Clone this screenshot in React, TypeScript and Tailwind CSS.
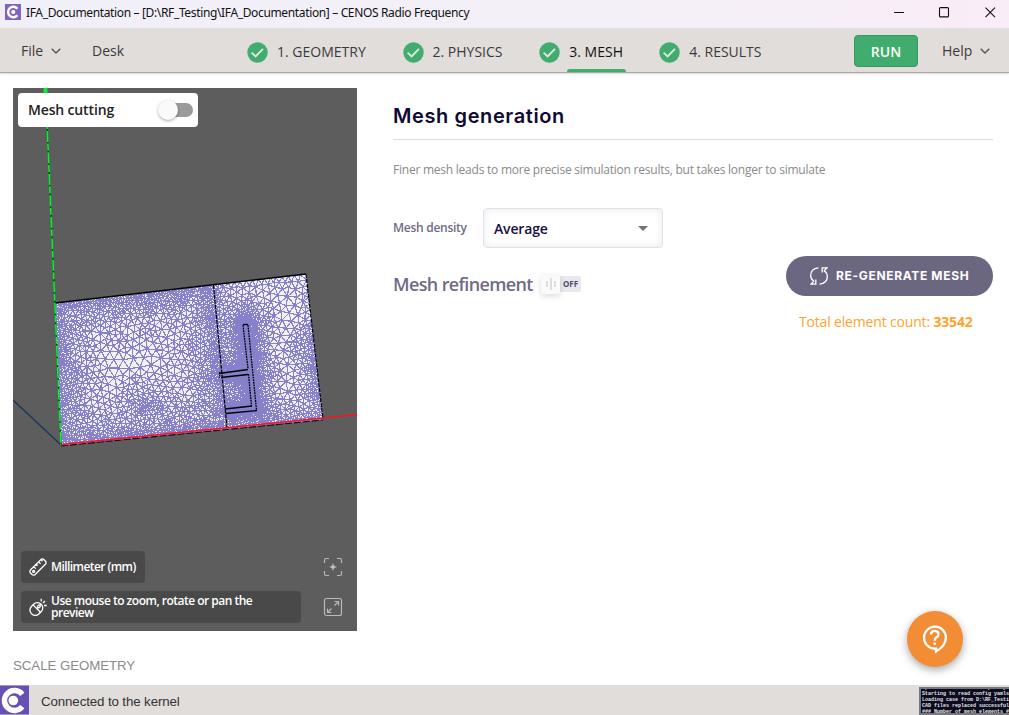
import React from "react";

type Pt = [number, number];

function createRandom(seed: number) {
  let s = seed;
  return () => {
    s = (s * 1664525 + 1013904223) % 4294967296;
    return s / 4294967296;
  };
}

const PLATE: Pt[] = [[55, 303], [306, 274], [323, 419], [61, 445]];

function segDist(x: number, y: number, a: Pt, b: Pt) {
  const dx = b[0] - a[0];
  const dy = b[1] - a[1];
  const t = Math.max(0, Math.min(1, ((x - a[0]) * dx + (y - a[1]) * dy) / (dx * dx + dy * dy)));
  return Math.hypot(x - a[0] - t * dx, y - a[1] - t * dy);
}

function inside(x: number, y: number) {
  return PLATE.every((a, i) => {
    const b = PLATE[(i + 1) % 4];
    return (b[0] - a[0]) * (y - a[1]) - (b[1] - a[1]) * (x - a[0]) > 0;
  });
}

const DIVIDER: [Pt, Pt] = [[213, 285], [227, 428]];
const ANTENNA: [Pt, Pt][] = [
  [[245, 324], [254, 410]],
  [[219, 375], [250, 371]],
  [[226, 411], [255, 408]],
];

// Target edge length of the mesh at a point of the plate.
function spacing(x: number, y: number) {
  let edge = 1e9;
  PLATE.forEach((a, i) => {
    edge = Math.min(edge, segDist(x, y, a, PLATE[(i + 1) % 4]));
  });
  const div = segDist(x, y, DIVIDER[0], DIVIDER[1]);
  let ant = 1e9;
  ANTENNA.forEach(([a, b]) => {
    ant = Math.min(ant, segDist(x, y, a, b));
  });
  const right = x > 213 + (y - 285) * 0.098;
  if (right) {
    const top = y < 325 ? 5.6 : 2.8;
    return Math.min(8.6, top + edge * 0.15, 1.7 + Math.max(0, ant - 6) * 0.21, 3.2 + div * 0.16);
  }
  const bump = Math.hypot((x - 147) / 1.6, y - 405);
  return Math.min(9.8, 2.7 + edge * 0.105, 2.6 + div * 0.1, 2.7 + bump * 0.16, 1.8 + ant * 0.14);
}

function samplePoints() {
  const rand = createRandom(77);
  const cell = 4;
  const grid = new Map<number, Pt[]>();
  const pts: Pt[] = [];
  const key = (cx: number, cy: number) => cx * 1000 + cy;
  const push = (p: Pt, force: boolean) => {
    const r = spacing(p[0], p[1]) * 0.78;
    const cx = Math.floor(p[0] / cell);
    const cy = Math.floor(p[1] / cell);
    const lim = force ? r * 0.8 : r;
    const n = Math.ceil(lim / cell);
    for (let i = -n; i <= n; i++) {
      for (let j = -n; j <= n; j++) {
        const list = grid.get(key(cx + i, cy + j));
        if (list && list.some((q) => Math.hypot(q[0] - p[0], q[1] - p[1]) < lim)) return;
      }
    }
    pts.push(p);
    const k = key(cx, cy);
    const own = grid.get(k);
    if (own) own.push(p);
    else grid.set(k, [p]);
  };
  const edges: [Pt, Pt][] = PLATE.map((a, i) => [a, PLATE[(i + 1) % 4]] as [Pt, Pt]);
  [...edges, DIVIDER].forEach(([a, b]) => {
    const n = Math.round(Math.hypot(b[0] - a[0], b[1] - a[1]) / 3);
    for (let i = 0; i <= n; i++) {
      push([a[0] + ((b[0] - a[0]) * i) / n, a[1] + ((b[1] - a[1]) * i) / n], true);
    }
  });
  const fixed = pts.length;
  for (let i = 0; i < 80000; i++) {
    const x = 55 + rand() * 270;
    const y = 273 + rand() * 173;
    if (inside(x, y)) push([x, y], false);
  }
  return { pts, fixed };
}

type Tri = { a: number; b: number; c: number; x: number; y: number; r: number };

// Bowyer-Watson triangulation, swept from left to right. Returns index pairs.
function triangulate(source: Pt[]): Pt[] {
  const n = source.length;
  const order = source.map((_, i) => i).sort((p, q) => source[p][0] - source[q][0]);
  const pts: Pt[] = [...source, [-5000, -4000], [5000, -4000], [190, 9000]];
  const make = (a: number, b: number, c: number): Tri => {
    const [ax, ay] = pts[a];
    const [bx, by] = pts[b];
    const [cx, cy] = pts[c];
    const d = 2 * (ax * (by - cy) + bx * (cy - ay) + cx * (ay - by)) || 1e-9;
    const a2 = ax * ax + ay * ay;
    const b2 = bx * bx + by * by;
    const c2 = cx * cx + cy * cy;
    const x = (a2 * (by - cy) + b2 * (cy - ay) + c2 * (ay - by)) / d;
    const y = (a2 * (cx - bx) + b2 * (ax - cx) + c2 * (bx - ax)) / d;
    return { a, b, c, x, y, r: Math.hypot(ax - x, ay - y) };
  };
  let open: Tri[] = [make(n, n + 1, n + 2)];
  const done: Tri[] = [];
  order.forEach((i) => {
    const [x, y] = pts[i];
    const next: Tri[] = [];
    const edges = new Map<number, [number, number]>();
    const toggle = (a: number, b: number) => {
      const k = a < b ? a * 100000 + b : b * 100000 + a;
      if (edges.has(k)) edges.delete(k);
      else edges.set(k, [a, b]);
    };
    open.forEach((t) => {
      if (x - t.x > t.r + 0.001) done.push(t);
      else if (Math.hypot(x - t.x, y - t.y) < t.r) {
        toggle(t.a, t.b);
        toggle(t.b, t.c);
        toggle(t.c, t.a);
      } else next.push(t);
    });
    edges.forEach(([a, b]) => next.push(make(a, b, i)));
    open = next;
  });
  const seen = new Set<number>();
  const out: Pt[] = [];
  [...done, ...open].forEach((t) => {
    if (t.a >= n || t.b >= n || t.c >= n) return;
    ([[t.a, t.b], [t.b, t.c], [t.c, t.a]] as Pt[]).forEach(([p, q]) => {
      const k = p < q ? p * 100000 + q : q * 100000 + p;
      if (seen.has(k)) return;
      seen.add(k);
      out.push([p, q]);
    });
  });
  return out;
}

function buildMesh() {
  const { pts, fixed } = samplePoints();
  let edges = triangulate(pts);
  // Laplacian smoothing evens out the triangles; boundary nodes stay put.
  for (let round = 0; round < 4; round++) {
    for (let pass = 0; pass < 2; pass++) {
      const sum = pts.map(() => [0, 0, 0]);
      edges.forEach(([p, q]) => {
        sum[p][0] += pts[q][0];
        sum[p][1] += pts[q][1];
        sum[p][2] += 1;
        sum[q][0] += pts[p][0];
        sum[q][1] += pts[p][1];
        sum[q][2] += 1;
      });
      for (let i = fixed; i < pts.length; i++) {
        if (sum[i][2]) pts[i] = [sum[i][0] / sum[i][2], sum[i][1] / sum[i][2]];
      }
    }
    edges = triangulate(pts);
  }
  return edges
    .map(([p, q]) => `M${pts[p][0].toFixed(1)} ${pts[p][1].toFixed(1)}L${pts[q][0].toFixed(1)} ${pts[q][1].toFixed(1)}`)
    .join("");
}

const MESH_PATH = buildMesh();

function MeshView() {
  return (
    <svg className="block h-[543px] w-[344px]" viewBox="13 88 344 543" fill="none">
      <path d="M13 400 61 445" stroke="#17375a" strokeWidth="1.4" />
      <path d="M55 303 306 274 323 419 61 445Z" fill="#f1f1f4" />
      <path d={MESH_PATH} stroke="#8681ca" strokeWidth="1.2" shapeRendering="crispEdges" />
      <path d="M245 322 254.500 408M221 375 248 371M228 411 254 408" stroke="#837ecb" strokeWidth="10" opacity=".45" />
      <path d="M55 303 306 274" stroke="#000" strokeWidth="1.5" />
      <path d="M306 274 323 419M213.500 285 227 428" stroke="#000" strokeWidth="1.2" strokeDasharray="4 1" />
      <path d="M61 446 323 420" stroke="#111" strokeWidth="1.1" strokeDasharray="7 2" />
      <path d="M243 324.500H248" stroke="#000" strokeWidth="1.3" />
      <path d="M243 325 248 369M248 325 256.500 410M248.500 374 251.500 406M219.500 372V378" stroke="#000" strokeWidth="1.3" strokeDasharray="1.800 .8" />
      <path d="M219 373.500 248 369.500M221 377.500 248 374.500M225 409 252 406M226 413.500 257 410.500" stroke="#000" strokeWidth="1.300" />
      <path d="M45.500 88 61 445" stroke="#12361a" strokeWidth="1.4" />
      <path d="M45.500 88 61 445" stroke="#00f52b" strokeWidth="1.600" strokeDasharray="11 1.500 7 2" />
      <path d="M45.500 88V94" stroke="#00f52b" strokeWidth="4" />
      <path d="M61 444.500 357 414.500" stroke="#ff1020" strokeWidth="1.5" />
    </svg>
  );
}

function CenosLogo({ className }: { className: string }) {
  return (
    <svg className={className} viewBox="0 0 29 29" fill="none">
      <rect width="29" height="29" fill="#6650b4" />
      <path d="M22.300 8.800A10 10 0 1 0 22.300 21.200" stroke="#fff" strokeWidth="5.400" />
      <circle cx="13.300" cy="15" r="4.800" fill="#fff" />
    </svg>
  );
}

function SmallLogo() {
  return (
    <svg className="mb-[4px] h-4 w-4" viewBox="0 0 16 16" fill="none">
      <rect width="16" height="16" fill="#8063c4" />
      <path d="M12.400 4.800A5.200 5.200 0 1 0 12.400 11.200" stroke="#fff" strokeWidth="2.400" />
      <circle cx="8.300" cy="8" r="2.100" fill="#fff" />
    </svg>
  );
}

function Chevron() {
  return (
    <svg className="h-[6px] w-[10px]" viewBox="0 0 10 6" fill="none" stroke="#555" strokeWidth="1.300">
      <path d="M.7.7 5 5 9.300.7" />
    </svg>
  );
}

function Check() {
  return (
    <svg className="h-[21px] w-[21px] shrink-0" viewBox="0 0 21 21" fill="none">
      <circle cx="10.500" cy="10.500" r="10.200" fill="#40ac6d" />
      <path d="M4.600 10.700 8.600 14.400 16 6.800" stroke="#e8e6e2" strokeWidth="1.800" />
    </svg>
  );
}

function Step({ label, width, active }: { label: React.ReactNode; width: string; active?: boolean }) {
  return (
    <div className={`flex h-[44px] shrink-0 gap-[9px] ${width}`}>
      <div className="pt-[14px]"><Check /></div>
      <div className={`relative flex h-full items-center pt-[3px] text-[14px] whitespace-nowrap ${active ? "text-[#111]" : "text-[#3b3b3b]"}`}>
        {label}
        {active && <span className="absolute bottom-0 -left-[2px] h-[3px] w-[59px] rounded-t-[3px] bg-[#40ac6d]" />}
      </div>
    </div>
  );
}

export default function App() {
  return (
    <div className="flex h-[715px] w-[1009px] flex-col overflow-hidden bg-white font-['Open_Sans',sans-serif]">
      <div className="flex h-[28px] shrink-0 items-center bg-linear-to-r from-[#f1eff8] via-[#f4f0f8] via-60% to-[#f9edf7] pl-[5px]">
        <SmallLogo />
        <span className="mb-[3px] ml-[5px] text-[12px] tracking-[-0.355px] whitespace-nowrap text-[#111] font-['Noto_Sans',sans-serif]">IFA_Documentation – [D:\RF_Testing\IFA_Documentation] – CENOS Radio Frequency</span>
        <svg className="mr-[13px] mb-[4px] ml-auto h-[11px] w-[102px]" viewBox="0 0 102 11" fill="none" stroke="#111" strokeWidth="1.100">
          <path d="M0 5.500H10M91.500.7 101 10.200M101 .7 91.500 10.200" />
          <rect x="45.500" y=".6" width="9" height="9.300" rx="1" />
        </svg>
      </div>

      <div className="flex h-[45px] shrink-0 border-b border-[#aaa8a6] bg-[#e1ddda] pl-[21px] text-[14px] text-[#3b3b3b] shadow-[0_1px_2px_rgba(0,0,0,0.15)]">
        <div className="flex h-[45px] w-[71px] items-center gap-[8px]"><span>File</span><Chevron /></div>
        <div className="flex h-[45px] w-[155px] items-center">Desk</div>
        <Step label="1. GEOMETRY" width="w-[155.500px]" />
        <Step label="2. PHYSICS" width="w-[136.800px]" />
        <Step label="3. MESH" width="w-[119.900px]" active />
        <Step label="4. RESULTS" width="w-[194.800px]" />
        <button className="mt-[7px] h-[32px] w-[64px] rounded-[4px] border border-[#389660] bg-[#40ac6d] text-[14px] font-semibold text-white">RUN</button>
        <div className="ml-[24px] flex h-[45px] items-center gap-[8px]"><span>Help</span><Chevron /></div>
      </div>

      <div className="flex h-[612px] shrink-0 pl-[13px]">
        <div className="w-[344px] shrink-0 pt-[15px]">
          <div className="relative h-[543px] bg-[#5d5d5d]">
            <MeshView />
            <div className="absolute top-[5px] left-[5px] flex h-[34px] w-[180px] items-center justify-between rounded-[4px] bg-white pr-[5px] pl-[10px]">
              <span className="mb-px text-[14px] font-semibold tracking-[-0.150px] text-[#222]">Mesh cutting</span>
              <span className="flex h-[14px] w-[34px] items-center rounded-full bg-[#9b9b9b]">
                <span className="-ml-[1px] h-5 w-5 shrink-0 rounded-full bg-[#fafafa] shadow-[0_1px_3px_rgba(0,0,0,0.35)]" />
              </span>
            </div>
            <div className="absolute inset-x-[8px] bottom-[8px] flex flex-col gap-[8px] font-['Open_Sans',sans-serif]">
              <div className="flex items-center justify-between pr-[6px]">
                <div className="flex h-[32px] w-[124px] items-center gap-[4px] rounded-[4px] bg-[#494949] pl-[8px] text-[12px] font-semibold whitespace-nowrap text-white">
                  <svg className="h-[18px] w-[18px] shrink-0" viewBox="0 0 18 18" fill="none" stroke="#fff" strokeWidth="1.300">
                    <path d="M1.600 11.800 11.800 1.600Q13.200.300 14.800 1.500L16.500 3.200Q17.700 4.800 16.400 6.200L6.200 16.400Q4.600 17.700 3 16.500L1.500 15Q.300 13.400 1.600 11.800ZM4.800 8.700 6.800 10.600M7.200 6.300 8.600 7.600M9.600 3.900 11.600 5.800M12 1.800 13.500 3.200" />
                    <circle cx="4.600" cy="13.400" r="1" />
                  </svg>
                  <span className="tracking-[-0.570px]">Millimeter (mm)</span>
                </div>
                <svg className="h-[20px] w-[20px]" viewBox="0 0 20 20" fill="none" stroke="#b8b8b8" strokeWidth="1.200">
                  <path d="M1.500 6V3Q1.500 1.500 3 1.500H6M14 1.500H17Q18.500 1.500 18.500 3V6M18.500 14V17Q18.500 18.500 17 18.500H14M6 18.500H3Q1.500 18.500 1.500 17V14" />
                  <path d="M10 6.500 11 9 13.500 10 11 11 10 13.500 9 11 6.500 10 9 9Z" fill="#c5c5c5" strokeWidth=".3" />
                </svg>
              </div>
              <div className="flex items-center justify-between pr-[6px]">
                <div className="flex h-[32px] w-[280px] items-center gap-[4px] rounded-[4px] bg-[#494949] pl-[8px] text-[12px] leading-[12px] font-semibold text-white">
                  <svg className="h-[18px] w-[18px] shrink-0" viewBox="0 0 18 18" fill="none" stroke="#fff" strokeWidth="1.300">
                    <g transform="rotate(45 7 11)">
                      <rect x="2" y="4" width="10.500" height="13.500" rx="5" />
                      <path d="M2 10.200H12.500M7.250 4V5.500M7.250 8.500V10" />
                      <rect x="6.200" y="5.600" width="2.100" height="2.900" rx="1" />
                    </g>
                    <path d="M12.200 3.500V.800M14 5 16 3M15 7.500H17.700" />
                  </svg>
                  <span className="w-[225px] tracking-[-0.510px]">Use mouse to zoom, rotate or pan the preview</span>
                </div>
                <svg className="h-[20px] w-[20px]" viewBox="0 0 20 20" fill="none" stroke="#b8b8b8" strokeWidth="1.200">
                  <rect x="1.500" y="1.500" width="17" height="17" rx="2" />
                  <path d="M11.500 8.500 15.500 4.500M11.500 4.500H15.500V8.500M8.500 11.500 4.500 15.500M8.500 15.500H4.500V11.500" />
                </svg>
              </div>
            </div>
          </div>
          <div className="pt-[25px] text-[13.300px] leading-[20px] tracking-[-0.070px] text-[#8a8a8a] font-['Liberation_Sans',sans-serif]">SCALE GEOMETRY</div>
        </div>

        <div className="ml-[36px] w-[600px] shrink-0 font-['Open_Sans',sans-serif]">
          <h1 className="h-[67px] border-b border-[#dcdcdc] pt-[27px] text-[20px] leading-[32px] font-semibold tracking-[0.600px] text-[#0e0a33] font-['Inter',sans-serif]">Mesh generation</h1>
          <p className="pt-[21px] text-[12px] leading-[18px] tracking-[-0.235px] text-[#8a8a8a]">Finer mesh leads to more precise simulation results, but takes longer to simulate</p>
          <div className="mt-[29px] flex h-[40px] items-center">
            <span className="w-[90px] text-[12px] font-semibold tracking-[-0.270px] whitespace-nowrap text-[#6f6a85]">Mesh density</span>
            <div className="flex h-[40px] w-[180px] items-center justify-between rounded-[4px] border border-[#e2e1e9] bg-white pr-[14px] pl-[10px] text-[14px] font-semibold tracking-[-0.150px] text-[#17103f] shadow-[inset_0_0_9px_rgba(60,50,90,0.1)]">
              <span>Average</span>
              <svg className="h-[5px] w-[10px]" viewBox="0 0 10 5"><path d="M0 0H10L5 5Z" fill="#757575" /></svg>
            </div>
          </div>
          <div className="flex justify-between">
            <div className="mt-[24px] flex h-[24px] items-center">
              <h2 className="w-[148px] text-[18px] font-semibold tracking-[-0.640px] whitespace-nowrap text-[#706b86]">Mesh refinement</h2>
              <div className="flex items-center">
                <span className="z-10 flex h-[19px] w-[19px] items-center justify-center gap-[2px] rounded-[2px] bg-[#fafafa] shadow-[0_2px_6px_rgba(0,0,0,0.15)]">
                  <i className="h-[6px] w-[2px] bg-[#dedee4]" /><i className="h-[12px] w-[2px] bg-[#dedee4]" /><i className="h-[6px] w-[2px] bg-[#dedee4]" />
                </span>
                <span className="flex h-[16px] w-[21px] items-center justify-center rounded-r-[2px] bg-[#e9e8ed] text-[8px] font-bold text-[#504b67]">OFF</span>
              </div>
            </div>
            <div className="mt-[8px] w-[207px]">
              <button className="flex h-[40px] w-[207px] items-center rounded-full bg-[#6b6780] pl-[24px] text-[12px] font-bold whitespace-nowrap text-white font-['Inter',sans-serif]">
                <svg className="mr-[8px] h-[18px] w-[18px]" viewBox="0 0 18 18" fill="none" stroke="#fff" strokeWidth="1.300">
                  <path d="M8.500.800Q.700 1.500.700 8.500Q.700 12 3.800 14.200L1 17.200H5.800V12.600M9.500 17.200Q17.300 16.500 17.300 9.500Q17.300 6 14.200 3.800L17 .800H12.200V5.400" />
                </svg>
                <span className="tracking-[0.660px]">RE-GENERATE MESH</span>
              </button>
              <div className="pt-[16px] pl-[13px] text-[14px] leading-[20px] tracking-[-0.170px] whitespace-nowrap text-[#ffa42e]">Total element count: <b>33542</b></div>
            </div>
          </div>
        </div>
      </div>

      <div className="relative flex h-[30px] shrink-0 items-center justify-between bg-[#e1ddda]">
        <div className="flex h-full items-center">
          <CenosLogo className="h-[30px] w-[29px]" />
          <span className="mt-[3px] ml-[12px] text-[13.300px] tracking-[-0.110px] text-[#333] font-['Liberation_Sans',sans-serif]">Connected to the kernel</span>
        </div>
        <pre className="mt-[2px] h-[28px] w-[90px] overflow-hidden border-2 border-r-0 border-[#77777b] bg-[#0c0c20] pl-[1px] text-[5px] leading-[6px] font-bold text-[#e5e5e5] font-['Liberation_Mono',monospace]"><div className="-mt-[4px]">{"Updated PTDef of 1 temporary\nStarting to read config yamls\nLoading case from D:\\RF_Testi\nCAD files replaced successful\n### Number of mesh elements #"}</div></pre>
        <button className="absolute right-[46px] bottom-[48px] flex h-[56px] w-[56px] items-center justify-center rounded-full bg-[#f28c35] shadow-[0_3px_8px_rgba(0,0,0,0.35)]">
          <svg className="h-[30px] w-[26px]" viewBox="0 0 26 30" fill="none" stroke="#fff" strokeWidth="2.300">
            <path d="M14 24.700H12.500A11 11 0 1 1 24 13.700Q23.500 22 14 27.500Z" />
            <path d="M9 10.500Q9 6.800 12.700 6.800Q16.500 7 16.500 10.200Q16.500 12 14.300 13.500Q12.700 14.700 12.700 16.800M12.700 18.500V21" />
          </svg>
        </button>
      </div>
    </div>
  );
}
